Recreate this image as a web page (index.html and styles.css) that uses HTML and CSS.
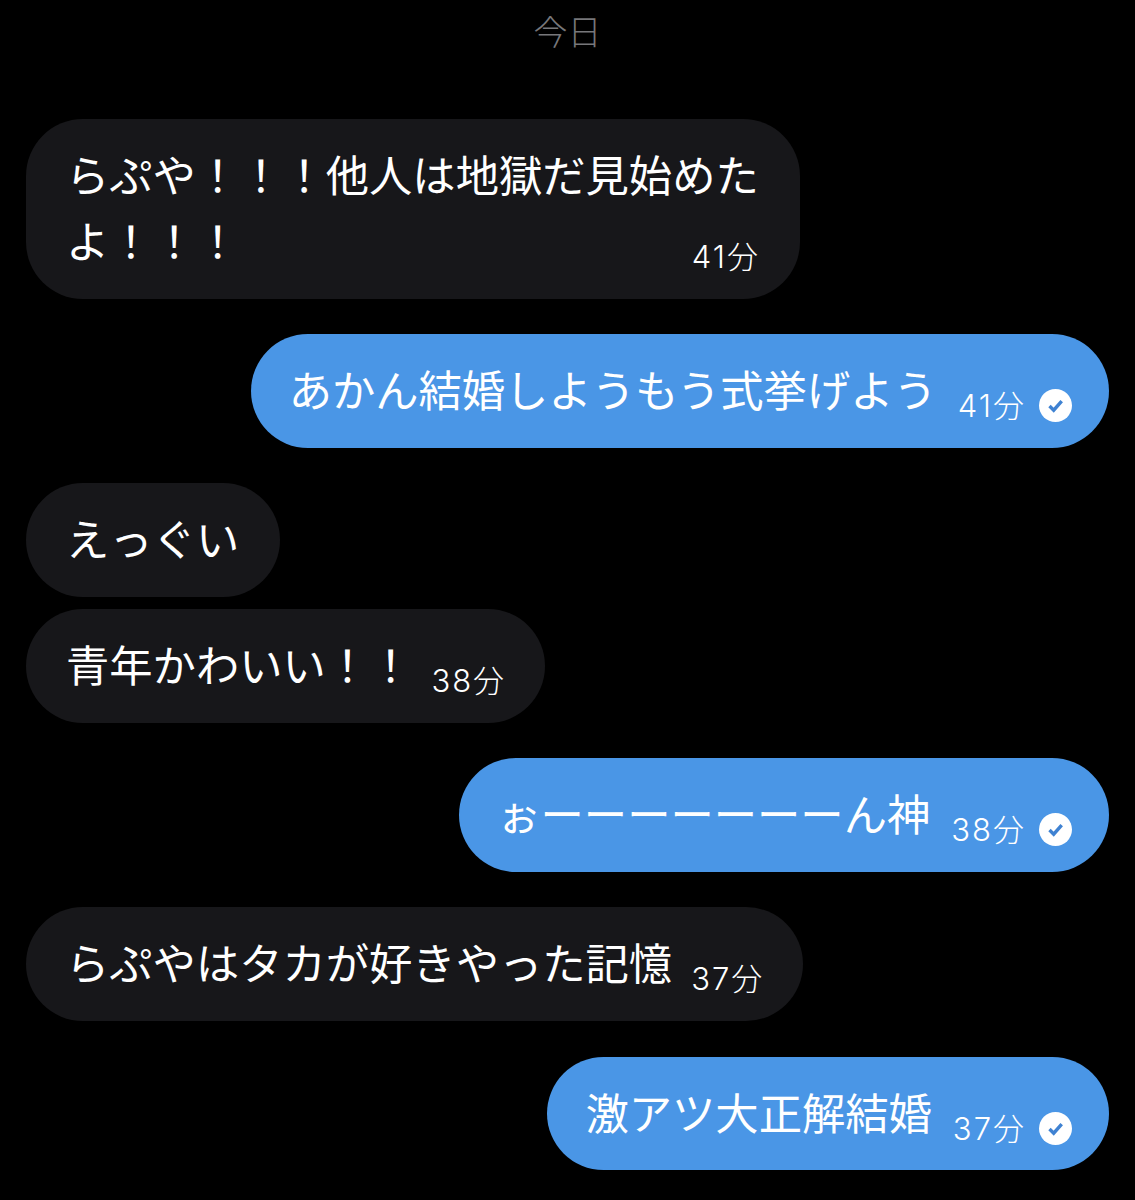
FILE: index.html
```html
<!DOCTYPE html>
<html lang="ja">
<head>
<meta charset="utf-8">
<title>今日</title>
<link rel="stylesheet" href="styles.css">
</head>
<body>
<main class="chat">
  <div class="day">今日</div>
  <div class="msg in wrap"><span class="text">らぷや！！！他人は地獄だ見始めたよ！！！</span><span class="time">41分</span></div>
  <div class="msg out"><span class="text">あかん結婚しようもう式挙げよう</span><span class="time">41分</span><svg class="check" viewBox="0 0 33 33"><circle cx="16.5" cy="16.5" r="16.5" fill="#fff"/><path d="M10.5 17l4.2 4.2 8-9" fill="none" stroke="#3f82d2" stroke-width="3.4"/></svg></div>
  <div class="msg in group"><span class="text">えっぐい</span></div>
  <div class="msg in"><span class="text">青年かわいい！！</span><span class="time">38分</span></div>
  <div class="msg out"><span class="text">ぉーーーーーーーん神</span><span class="time">38分</span><svg class="check" viewBox="0 0 33 33"><circle cx="16.5" cy="16.5" r="16.5" fill="#fff"/><path d="M10.5 17l4.2 4.2 8-9" fill="none" stroke="#3f82d2" stroke-width="3.4"/></svg></div>
  <div class="msg in"><span class="text">らぷやはタカが好きやった記憶</span><span class="time">37分</span></div>
  <div class="msg out"><span class="text">激アツ大正解結婚</span><span class="time">37分</span><svg class="check" viewBox="0 0 33 33"><circle cx="16.5" cy="16.5" r="16.5" fill="#fff"/><path d="M10.5 17l4.2 4.2 8-9" fill="none" stroke="#3f82d2" stroke-width="3.4"/></svg></div>
</main>
</body>
</html>
```
FILE: styles.css
```css
html, body {
  margin: 0;
  padding: 0;
  background: #000;
}
body {
  font-family: "Noto Sans CJK JP", "Noto Sans", sans-serif;
  color: #fff;
  height: 1200px;
  overflow: hidden;
}
.chat {
  display: flex;
  flex-direction: column;
  padding: 6px 26px 0;
}
.day {
  text-align: center;
  font-size: 34px;
  line-height: 50px;
  font-weight: 300;
  color: #77777a;
  margin-bottom: 63px;
}
.msg {
  display: flex;
  align-items: flex-end;
  width: fit-content;
  box-sizing: border-box;
  border-radius: 57px;
  padding: 21px 41px 26.7px 40px;
  margin-bottom: 35.5px;
}
.msg.group {
  margin-bottom: 12px;
}
.in {
  background: #17171a;
  align-self: flex-start;
}
.in .time {
  margin-left: 19px;
}
.out {
  background: #4a96e6;
  align-self: flex-end;
  padding-left: 38px;
  padding-right: 37px;
}
.text {
  font-size: 43.3px;
  line-height: 66px;
  font-weight: 400;
  display: block;
}
.time {
  font-family: "Inter", "Noto Sans CJK JP", sans-serif;
  font-size: 31px;
  line-height: 30px;
  letter-spacing: 2px;
  margin-left: 21px;
  margin-right: -2px;
  font-weight: 300;
  white-space: nowrap;
}
.check {
  width: 33px;
  height: 33px;
  margin: 0 0 -1px 15px;
  flex: none;
}
.wrap {
  display: block;
  max-width: 774px;
}
.wrap .text {
  display: inline;
}
.in.wrap .time {
  display: block;
  width: fit-content;
  margin: -30px -1px 0 auto;
}
```
